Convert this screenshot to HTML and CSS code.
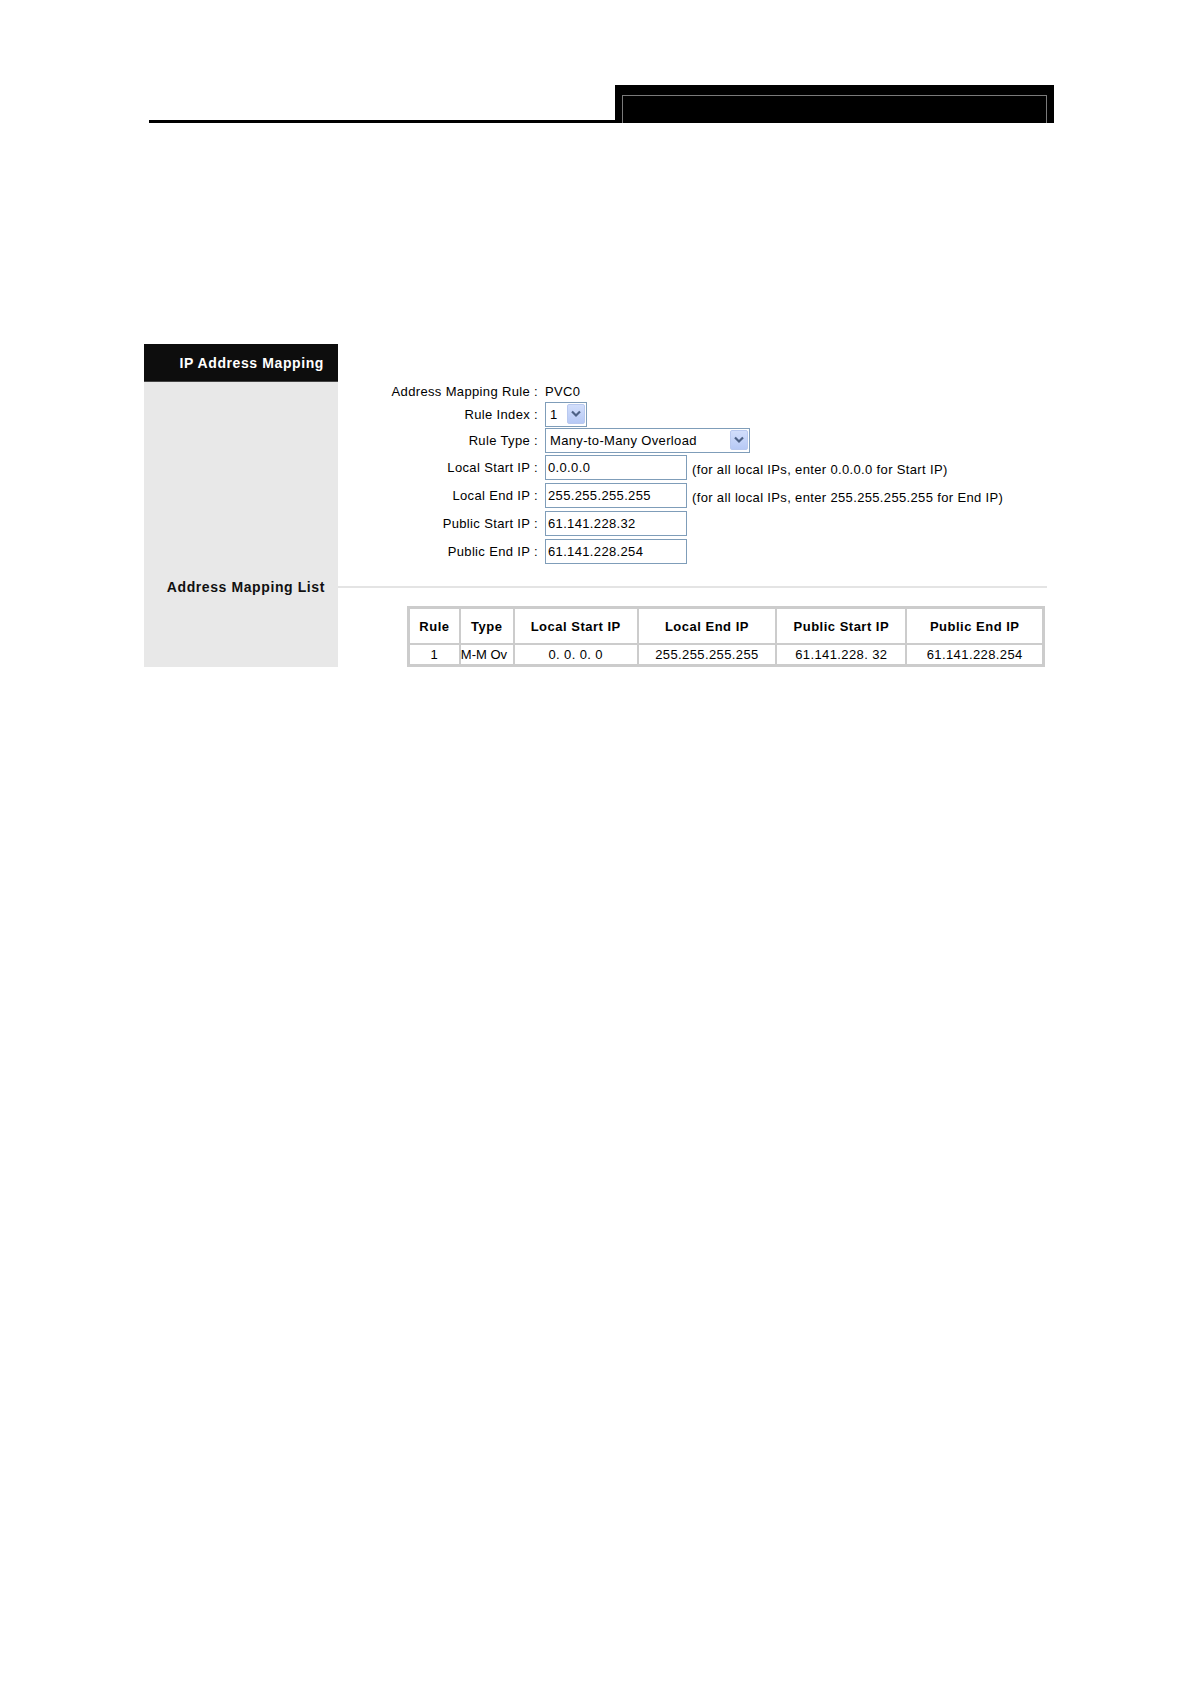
FILE: index.html
```html
<!DOCTYPE html>
<html>
<head>
<meta charset="utf-8">
<title>IP Address Mapping</title>
<link rel="stylesheet" href="styles.css">
</head>
<body>
<div class="header">
  <div class="header-line"></div>
  <div class="header-box"><div class="header-inner"></div></div>
</div>

<div class="panel">
  <div class="side side-title">IP Address Mapping</div>
  <div class="main main-top"></div>

  <div class="side"></div>
  <div class="main form">
    <div class="row row-text">
      <div class="label">Address Mapping Rule :</div>
      <div class="value">PVC0</div>
    </div>
    <div class="row row-select">
      <div class="label">Rule Index :</div>
      <div class="value">
        <div class="select select-index">
          <span class="select-text">1</span>
          <span class="select-btn"><svg width="10" height="8" viewBox="0 0 10 8"><path d="M1 1.5 L5 5.5 L9 1.5" fill="none" stroke="#4d6185" stroke-width="2.2"/></svg></span>
        </div>
      </div>
    </div>
    <div class="row row-select">
      <div class="label">Rule Type :</div>
      <div class="value">
        <div class="select select-type">
          <span class="select-text">Many-to-Many Overload</span>
          <span class="select-btn"><svg width="10" height="8" viewBox="0 0 10 8"><path d="M1 1.5 L5 5.5 L9 1.5" fill="none" stroke="#4d6185" stroke-width="2.2"/></svg></span>
        </div>
      </div>
    </div>
    <div class="row row-input">
      <div class="label">Local Start IP :</div>
      <div class="value"><div class="input">0.0.0.0</div><span class="hint">(for all local IPs, enter 0.0.0.0 for Start IP)</span></div>
    </div>
    <div class="row row-input">
      <div class="label">Local End IP :</div>
      <div class="value"><div class="input">255.255.255.255</div><span class="hint">(for all local IPs, enter 255.255.255.255 for End IP)</span></div>
    </div>
    <div class="row row-input">
      <div class="label">Public Start IP :</div>
      <div class="value"><div class="input">61.141.228.32</div></div>
    </div>
    <div class="row row-input">
      <div class="label">Public End IP :</div>
      <div class="value"><div class="input">61.141.228.254</div></div>
    </div>
  </div>

  <div class="side side-sub">Address Mapping List</div>
  <div class="main sep-cell"><div class="sep"></div></div>

  <div class="side"></div>
  <div class="main table-cell">
    <table class="list">
      <thead>
        <tr>
          <th class="c-rule">Rule</th>
          <th class="c-type">Type</th>
          <th class="c-ls">Local Start IP</th>
          <th class="c-le">Local End IP</th>
          <th class="c-ps">Public Start IP</th>
          <th class="c-pe">Public End IP</th>
        </tr>
      </thead>
      <tbody>
        <tr>
          <td>1</td>
          <td class="t-left">M-M Ov</td>
          <td>0. 0. 0. 0</td>
          <td>255.255.255.255</td>
          <td>61.141.228. 32</td>
          <td>61.141.228.254</td>
        </tr>
      </tbody>
    </table>
  </div>
</div>
</body>
</html>
```

FILE: styles.css
```css
html, body {
  margin: 0;
  padding: 0;
  background: #ffffff;
}
body {
  font-family: "Liberation Sans", Arial, sans-serif;
  font-size: 13px;
  color: #000;
  width: 1190px;
  min-height: 1684px;
}

/* page header */
.header {
  display: flex;
  align-items: flex-end;
  margin-left: 149px;
  padding-top: 85px;
  width: 905px;
}
.header-line {
  width: 466px;
  height: 3px;
  background: #000;
}
.header-box {
  width: 439px;
  height: 38px;
  background: #000;
  box-sizing: border-box;
  padding: 10px 7px 0 7px;
}
.header-inner {
  height: 28px;
  border: 1px solid #7a7a7a;
  border-bottom: none;
  box-sizing: border-box;
}

/* panel */
.panel {
  display: grid;
  grid-template-columns: 194px 712px;
  margin-left: 144px;
  margin-top: 221px;
}
.side {
  background: #e8e8e8;
}
.side-title {
  background: #0d0d0d;
  color: #fff;
  font-weight: bold;
  font-size: 14px;
  letter-spacing: 0.6px;
  height: 38px;
  box-sizing: border-box;
  border-bottom: 1px solid #444;
  text-align: right;
  padding-right: 14px;
  line-height: 38px;
}
.side-sub {
  font-weight: bold;
  font-size: 14px;
  letter-spacing: 0.6px;
  color: #111;
  text-align: right;
  padding-right: 13px;
  display: flex;
  align-items: center;
  justify-content: flex-end;
}

/* form */
.form {
  padding-bottom: 11px;
  letter-spacing: 0.35px;
}
.row {
  display: flex;
  align-items: center;
}
.row-text { height: 19px; }
.row-select { height: 26px; }
.row-input { height: 28px; }
.label {
  width: 200px;
  text-align: right;
  white-space: nowrap;
}
.value {
  margin-left: 7px;
  display: flex;
  align-items: center;
}
.select {
  height: 25px;
  box-sizing: border-box;
  border: 1px solid #7f9db9;
  background: #fff;
  display: flex;
  align-items: center;
  justify-content: space-between;
  padding: 1px 1px 1px 4px;
}
.select-index { width: 42px; }
.select-type { width: 205px; }
.select-btn {
  width: 18px;
  height: 20px;
  box-sizing: border-box;
  border: 1px solid #b9c9ef;
  border-radius: 2px;
  background: linear-gradient(#d2defb, #b7c9f5);
  display: flex;
  align-items: center;
  justify-content: center;
}
.input {
  width: 142px;
  height: 25px;
  box-sizing: border-box;
  border: 1px solid #7f9db9;
  padding: 0 2px;
  line-height: 23px;
  white-space: nowrap;
}
.hint {
  margin-left: 5px;
  white-space: nowrap;
  position: relative;
  top: 2px;
}

/* separator */
.sep-cell {
  height: 22px;
  display: flex;
  align-items: center;
}
.sep {
  width: 709px;
  height: 2px;
  background: #e4e4e4;
}

/* table */
.table-cell {
  padding: 8px 0 0 69px;
}
.list {
  border-collapse: collapse;
  border: 3px solid #cccccc;
  width: 638px;
}
.list th, .list td {
  border: 2px solid #cccccc;
  text-align: center;
  white-space: nowrap;
  padding: 0;
}
.list th {
  height: 34px;
  font-weight: bold;
  font-size: 13px;
  letter-spacing: 0.5px;
}
.list td {
  height: 19px;
  font-size: 13px;
  line-height: 19px;
  letter-spacing: 0.4px;
}
.list td.t-left {
  text-align: left;
  letter-spacing: 0;
}
.c-rule { width: 46px; }
.c-type { width: 49px; }
.c-ls { width: 115px; }
.c-le { width: 129px; }
.c-ps { width: 121px; }
.c-pe { width: 127px; }
```
